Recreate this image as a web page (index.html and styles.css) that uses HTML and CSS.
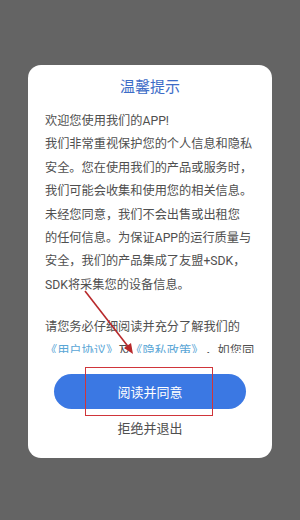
FILE: index.html
```html
<!DOCTYPE html>
<html lang="zh-CN">

<head>
    <meta charset="UTF-8">
    <meta name="viewport" content="width=device-width, initial-scale=1.0">
    <title>温馨提示</title>
    <link rel="stylesheet" href="styles.css">
</head>

<body>
    <div class="dialog">
        <h1 class="dialog-title">温馨提示</h1>

        <div class="dialog-body">
            <p>
                欢迎您使用我们的APP!<br>
                我们非常重视保护您的个人信息和隐私<br>
                安全。您在使用我们的产品或服务时，<br>
                我们可能会收集和使用您的相关信息。<br>
                未经您同意，我们不会出售或出租您<br>
                的任何信息。为保证APP的运行质量与<br>
                安全，我们的产品集成了友盟+SDK，<br>
                SDK将采集您的设备信息。
            </p>
            <p>
                请您务必仔细阅读并充分了解我们的<br>
                <a href="#" class="link">《用户协议》</a>及<a href="#" class="link">《隐私政策》</a><span class="gap">，如您同</span><br>
                意，请点击下方按钮开始使用我们的服务。
            </p>
        </div>

        <button class="btn-agree">阅读并同意</button>
        <button class="btn-refuse">拒绝并退出</button>

        <!-- annotation overlay -->
        <div class="mark-box"></div>
        <svg class="mark-arrow" width="300" height="520" viewBox="0 0 300 520">
            <line x1="85" y1="291" x2="130" y2="349" stroke="#b8292b" stroke-width="1.6" />
            <polygon points="133,354 124,348 131,343" fill="#b8292b" />
        </svg>
    </div>
</body>

</html>
```

FILE: styles.css
```css
body {
    margin: 0;
    height: 520px;
    background-color: #646464;
    font-family: "Roboto", "Noto Sans CJK SC", sans-serif;
    display: flex;
    justify-content: center;
    align-items: flex-start;
}

.dialog {
    width: 244px;
    margin-top: 65px;
    background-color: white;
    border-radius: 13px;
    padding: 11px 0 19px;
    box-sizing: border-box;
    display: flex;
    flex-direction: column;
    align-items: center;
}

.dialog-title {
    margin: 0;
    font-size: 15px;
    line-height: 22px;
    font-weight: normal;
    color: #3d6cc7;
}

.dialog-body {
    align-self: stretch;
    margin-top: 12px;
    padding: 0 17px;
    height: 243px;
    overflow: hidden;
    color: #4f4f4f;
    font-size: 12.2px;
    line-height: 23.4px;
    white-space: nowrap;
}

.dialog-body p {
    margin: 0 0 19px;
}

.link {
    color: #5aa6d6;
    text-decoration: none;
}

.gap {
    margin-left: 8px;
}

.btn-agree {
    margin-top: 21px;
    width: 192px;
    height: 35px;
    border: none;
    border-radius: 18px;
    background-color: #3b78e3;
    color: white;
    font-family: inherit;
    font-size: 13px;
    cursor: pointer;
}

.btn-refuse {
    margin-top: 10px;
    border: none;
    background: none;
    padding: 0;
    line-height: 20px;
    color: #4f4f4f;
    font-family: inherit;
    font-size: 13px;
    cursor: pointer;
}

.mark-box {
    position: absolute;
    left: 85px;
    top: 367px;
    width: 126px;
    height: 47px;
    border: 1.5px solid #d0353a;
}

.mark-arrow {
    position: absolute;
    left: 0;
    top: 0;
    pointer-events: none;
}
```
